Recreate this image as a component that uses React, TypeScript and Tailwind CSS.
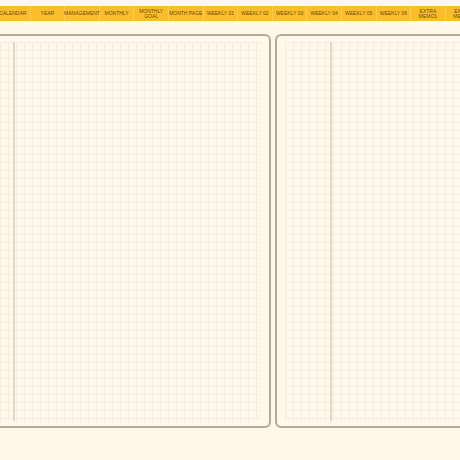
import React from 'react';

const tabs = [
  ['CALENDAR'],
  ['YEAR'],
  ['MANAGEMENT'],
  ['MONTHLY'],
  ['MONTHLY', 'GOAL'],
  ['MONTH PAGE'],
  ['WEEKLY 01'],
  ['WEEKLY 02'],
  ['WEEKLY 03'],
  ['WEEKLY 04'],
  ['WEEKLY 05'],
  ['WEEKLY 06'],
  ['EXTRA', 'MEMO1'],
  ['EXTRA', 'MEMO2'],
];

const Page = () => (
  <div className="w-[313px] h-[394px] shrink-0 rounded-[6px] border-2 border-[#b5aa93] bg-[#fff8ec] px-[8px] pt-[6px] pb-[5px]">
    <div className="h-full bg-[linear-gradient(to_right,#f8ecdc_1px,transparent_1px),linear-gradient(to_bottom,#f8ecdc_1px,transparent_1px)] bg-[size:8px_8px]">
      <div className="ml-[45px] w-[2px] h-full bg-[#e0d7ca]" />
    </div>
  </div>
);

export default function App() {
  return (
    <div className="w-[460px] h-[460px] overflow-hidden bg-[#fff7ea] font-['Liberation_Sans',sans-serif]">
      <div className="mt-[6px] h-[15px] flex ml-[-4px] bg-[#fbbd2c]">
        {tabs.map((t, i) => (
          <div
            key={i}
            className="w-[34.6px] shrink-0 flex flex-col items-center justify-center border-r border-[#f9cc5c] text-[5px] leading-[5px] text-[#6a4b10] whitespace-nowrap"
          >
            {t.map((line) => (
              <span key={line}>{line}</span>
            ))}
          </div>
        ))}
      </div>
      <div className="mt-[13px] ml-[-42px] flex gap-[4px]">
        <Page />
        <Page />
      </div>
    </div>
  );
}
